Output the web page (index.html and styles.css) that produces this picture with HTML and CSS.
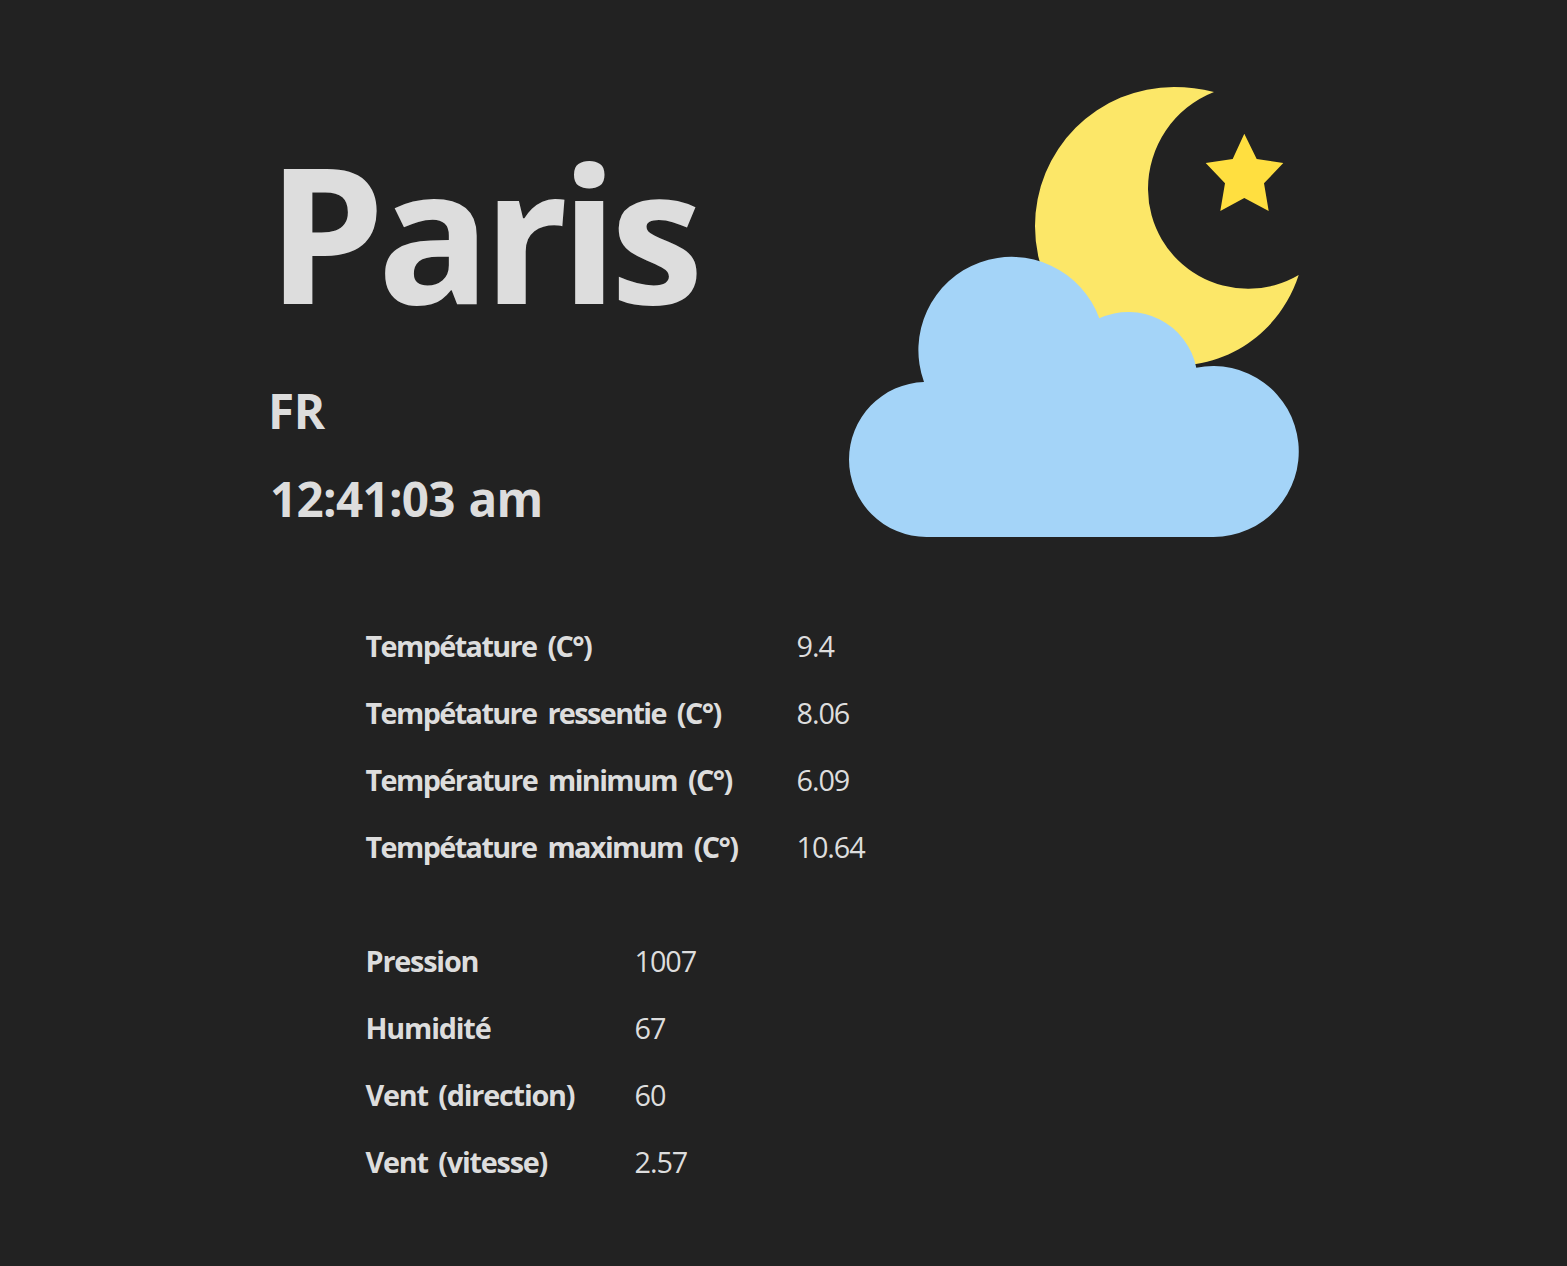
FILE: index.html
```html
<!DOCTYPE html>
<html lang="fr">
<head>
<meta charset="utf-8">
<title>Météo - Paris</title>
<link rel="stylesheet" href="styles.css">
</head>
<body>
<main class="weather">
  <header class="summary">
    <div class="place">
      <h1 class="city">Paris</h1>
      <h2 class="detail country">FR</h2>
      <h2 class="detail clock">12:41:03 am</h2>
    </div>
    <svg class="icon" viewBox="0 0 450 450" role="img" aria-label="Nuit nuageuse">
      <path fill="#fce768" d="M365 5Q345 0 325 0A139 139 0 0 0 186 139.3A139.3 139.3 0 0 0 347 276.9C396.5 269 434.5 234.5 449.7 188A100 100 0 0 1 299 102.5A104 104 0 0 1 365 5Z"/>
      <path fill="#ffdf40" d="M395.3 46.7L407.7 72L434.3 76L415 96.3L419.7 124L395.3 111L371.3 124L376 96.3L356.7 76L383.7 72Z"/>
      <path fill="#a4d4f8" d="M77.5 450A77.5 77.5 0 0 1 0 372.5A77.5 77.5 0 0 1 75 295A93.2 93.2 0 1 1 250.3 231.3A69.3 69.3 0 0 1 347.3 280.7A85.5 85.5 0 1 1 364.5 450Z"/>
    </svg>
  </header>
  <table class="readings temperatures">
    <tr><th>Tempétature (C°)</th><td>9.4</td></tr>
    <tr><th>Tempétature ressentie (C°)</th><td>8.06</td></tr>
    <tr><th>Température minimum (C°)</th><td>6.09</td></tr>
    <tr><th>Tempétature maximum (C°)</th><td>10.64</td></tr>
  </table>
  <table class="readings conditions">
    <tr><th>Pression</th><td>1007</td></tr>
    <tr><th>Humidité</th><td>67</td></tr>
    <tr><th>Vent (direction)</th><td>60</td></tr>
    <tr><th>Vent (vitesse)</th><td>2.57</td></tr>
  </table>
</main>
</body>
</html>
```
FILE: styles.css
```css
body {
  margin: 0;
  background: #222;
  color: #ddd;
  font-family: "Open Sans", "Noto Sans", sans-serif;
}

.weather {
  width: 1031px;
  height: 1179px;
  margin: 0 auto;
  padding-top: 87px;
}

.summary {
  display: flex;
  justify-content: space-between;
  height: 525px;
}

.place {
  padding-top: 16px;
}

.city {
  margin: 0 0 20px -1px;
  font-size: 188px;
  line-height: 257px;
  font-weight: 700;
  letter-spacing: -7.8px;
}

.detail {
  margin: 0 0 24px;
  font-size: 47.6px;
  line-height: 64px;
  font-weight: 700;
  letter-spacing: -0.4px;
}

.country {
  margin-top: -1px;
}

.clock {
  padding-left: 2px;
  letter-spacing: -0.7px;
  word-spacing: 2px;
}

.icon {
  width: 450px;
  height: 450px;
}

.readings {
  margin-left: 97.5px;
  border-collapse: collapse;
  font-size: 28.8px;
  line-height: 67px;
  text-align: left;
}

.readings th,
.readings td {
  padding: 0;
  white-space: nowrap;
}

.readings td {
  letter-spacing: -1.05px;
}

.temperatures th {
  width: 431px;
  letter-spacing: -1.6px;
  word-spacing: 5px;
}

.conditions {
  margin-top: 47px;
}

.conditions th {
  width: 269px;
  letter-spacing: -1.2px;
  word-spacing: 4px;
}
```
